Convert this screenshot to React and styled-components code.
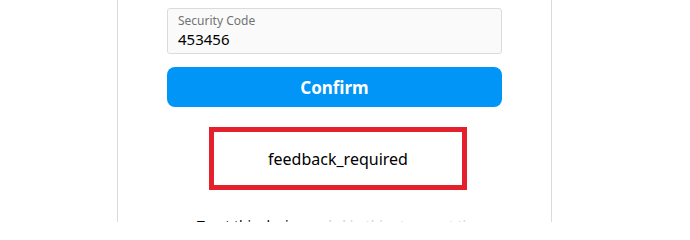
import React from 'react'
import styled, { createGlobalStyle } from 'styled-components'

const GlobalStyle = createGlobalStyle`
  body {
    margin: 0;
    background: #fff;
    font-family: "Segoe UI", "Noto Sans", "Liberation Sans", sans-serif;
    color: #262626;
  }
`

const Page = styled.div`
  height: 222px;
  overflow: hidden;
`

const Card = styled.div`
  width: 435px;
  margin-left: 117px;
  border-left: 1px solid #dbdbdb;
  border-right: 1px solid #dbdbdb;
  padding: 8px 49px 20px;
  box-sizing: border-box;
  min-height: 260px;
  display: flex;
  flex-direction: column;
  align-items: stretch;
`

const Field = styled.label`
  display: flex;
  flex-direction: column;
  height: 46px;
  box-sizing: border-box;
  padding: 4px 10px 0;
  background: #fafafa;
  border: 1px solid #dbdbdb;
  border-radius: 3px;
`

const FieldLabel = styled.span`
  font-size: 12px;
  line-height: 16px;
  color: #737373;
`

const FieldValue = styled.span`
  font-size: 15px;
  line-height: 20px;
  color: #000;
`

const Confirm = styled.button`
  margin-top: 13px;
  height: 40px;
  border: none;
  border-radius: 8px;
  background: #0095f6;
  color: #fff;
  font-family: inherit;
  font-size: 17px;
  font-weight: 700;
  cursor: pointer;
`

const Feedback = styled.div`
  align-self: center;
  margin: 20px 0 0 7px;
  width: 258px;
  height: 63px;
  box-sizing: border-box;
  border: 5px solid #e3202c;
  display: flex;
  align-items: center;
  justify-content: center;
  font-size: 16px;
  color: #000;
`

const Trust = styled.p`
  margin: 27px 0 0 30px;
  font-size: 14px;
  line-height: 18px;
  color: #000;
`

const Muted = styled.span`
  color: #d0d0d0;
`

export default function App() {
  return (
    <Page>
      <GlobalStyle />
      <Card>
        <Field>
          <FieldLabel>Security Code</FieldLabel>
          <FieldValue>453456</FieldValue>
        </Field>
        <Confirm>Confirm</Confirm>
        <Feedback>feedback_required</Feedback>
        <Trust>
          Trust this device <Muted>and skip this step next time</Muted>
        </Trust>
      </Card>
    </Page>
  )
}
